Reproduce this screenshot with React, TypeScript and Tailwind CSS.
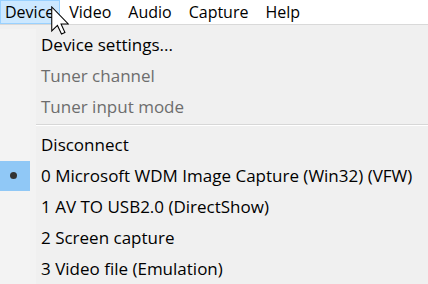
import React from "react";

const menus = ["Device", "Video", "Audio", "Capture", "Help"];

interface Item {
  label: string;
  disabled?: boolean;
  checked?: boolean;
}

const groups: Item[][] = [
  [
    { label: "Device settings..." },
    { label: "Tuner channel", disabled: true },
    { label: "Tuner input mode", disabled: true },
  ],
  [
    { label: "Disconnect" },
    { label: "0 Microsoft WDM Image Capture (Win32) (VFW)", checked: true },
    { label: "1 AV TO USB2.0 (DirectShow)" },
    { label: "2 Screen capture" },
    { label: "3 Video file (Emulation)" },
  ],
];

function Cursor() {
  return (
    <svg
      className="absolute left-[51px] top-[6px] pointer-events-none"
      width="18"
      height="29"
      viewBox="0 0 12 19"
    >
      <path
        d="M0.5 0.5 L0.5 16.5 L4.3 12.8 L7 18.5 L9.3 17.5 L6.7 11.8 L11.5 11.8 Z"
        fill="#fff"
        stroke="#000"
        strokeWidth="0.7"
        strokeLinejoin="miter"
      />
    </svg>
  );
}

export default function App() {
  return (
    <div
      className="relative w-[428px] h-[284px] overflow-hidden bg-[#f0f0f0] text-black text-[16px]"
      style={{ fontFamily: '"Open Sans", "Noto Sans", sans-serif' }}
    >
      {/* Menu bar */}
      <div className="flex h-[25px] bg-white border-b border-[#d9d9d9]">
        {menus.map((m, i) => (
          <div
            key={m}
            className={
              i === 0
                ? "flex items-center h-[24px] pl-[4px] pr-[5px] bg-[#cce8ff] border border-[#99d1ff]"
                : "flex items-center h-[24px] pl-[9px] pr-[8px]"
            }
          >
            {m}
          </div>
        ))}
      </div>

      {/* Dropdown */}
      <div className="pt-[4px] text-[17px]">
        {groups.map((g, gi) => (
          <div key={gi}>
            {gi > 0 && (
              <div className="flex h-[7px]">
                <div className="w-[36px] bg-[#f3f3f3]" />
                <div className="flex-1 pt-[2px]">
                  <div className="h-px bg-[#d7d7d7]" />
                  <div className="h-px bg-white" />
                </div>
              </div>
            )}
            {g.map((it) => (
              <div key={it.label} className="flex h-[31px]">
                <div className="w-[36px] flex items-center bg-[#f3f3f3]">
                  {it.checked && (
                    <div className="w-[30px] h-[30px] bg-[#90c8f6] flex items-center justify-center">
                      <div className="w-[7px] h-[7px] rounded-full bg-[#333] -ml-[3px]" />
                    </div>
                  )}
                </div>
                <div
                  className={
                    it.disabled
                      ? "flex items-center pl-[5px] text-[#6d6d6d] whitespace-nowrap"
                      : "flex items-center pl-[5px] whitespace-nowrap"
                  }
                >
                  {it.label}
                </div>
              </div>
            ))}
          </div>
        ))}
      </div>

      <Cursor />
    </div>
  );
}
